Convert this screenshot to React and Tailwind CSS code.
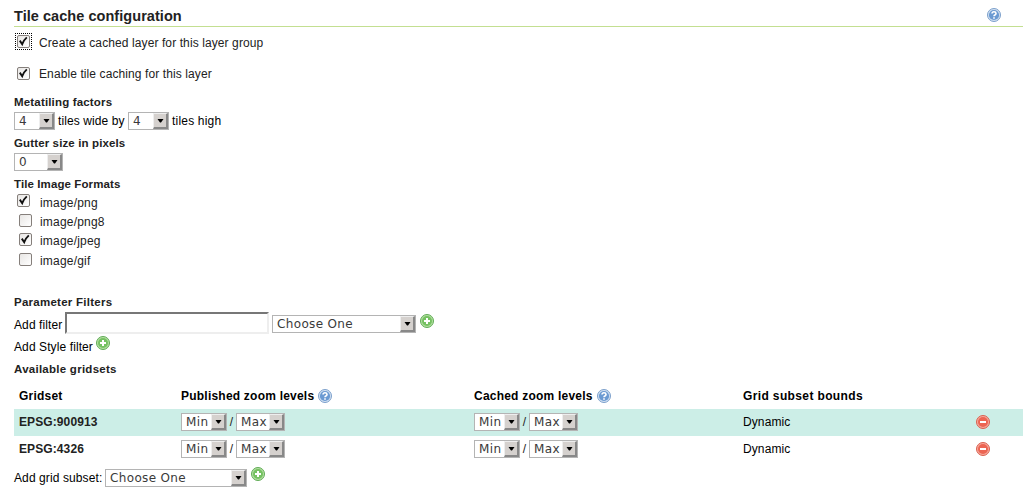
import React from "react";

function Check({ checked, focus, className = "" }) {
  return (
    <span className={`flex size-[17px] shrink-0 items-center justify-center border border-dotted ${focus ? "border-black" : "border-transparent"} ${className}`}>
      <span className="flex size-[13px] items-center justify-center rounded-[2px] border border-[#857f7b] bg-linear-to-br from-[#e8e6e4] to-white">
        {checked && (
          <svg width="11" height="11" viewBox="0 0 11 11" fill="none" className="shrink-0">
            <path d="M1.8 4.6 L4.2 8.2 Q5.8 4 8.8 1.4" stroke="#111" strokeWidth="1.9" />
          </svg>
        )}
      </span>
    </span>
  );
}

function Select({ children, className }) {
  return (
    <span className={`flex h-[18px] shrink-0 items-stretch justify-between border border-[#b4b4b4] bg-white font-['DejaVu_Sans',sans-serif] text-[12px] leading-[16px] tracking-[0.35px] text-[#3a3a3a] ${className}`}>
      <span className="pl-1">{children}</span>
      <span className="flex w-[15px] items-center justify-center border-t border-r-2 border-b-2 border-l border-t-[#eee] border-r-[#888] border-b-[#888] border-l-[#eee] bg-[#d5d1ce]">
        <svg width="7" height="4" viewBox="0 0 7 4"><path d="M0.5 0H6.5L4 3.5H3Z" fill="#000" /></svg>
      </span>
    </span>
  );
}

function Help({ className = "" }) {
  return (
    <svg width="14" height="14" viewBox="0 0 14 14" className={`shrink-0 ${className}`}>
      <circle cx="7" cy="7" r="6.5" fill="#d3e2f2" stroke="#7b9fcb" />
      <circle cx="7" cy="7" r="5.1" fill="#6b9ad2" />
      <path d="M5 5.5Q5.1 3.7 7 3.7T9 5.4Q9 6.4 7.9 7Q7 7.5 7 8.3M7 9.3V10.7" fill="none" stroke="#fff" strokeWidth="1.6" />
    </svg>
  );
}

function Add({ className = "" }) {
  return (
    <svg width="14" height="14" viewBox="0 0 14 14" className={`shrink-0 ${className}`}>
      <circle cx="7" cy="7" r="6.5" fill="#b5e0a3" stroke="#5fab55" />
      <circle cx="7" cy="7" r="5" fill="#75c162" />
      <path d="M7 4V10M4 7H10" stroke="#fff" strokeWidth="2" />
    </svg>
  );
}

function Remove() {
  return (
    <svg width="14" height="14" viewBox="0 0 14 14" className="shrink-0">
      <circle cx="7" cy="7" r="6.5" fill="#f7a99d" stroke="#d9604f" />
      <circle cx="7" cy="7" r="5" fill="#ec6553" />
      <path d="M4 7H10" stroke="#fff" strokeWidth="2" />
    </svg>
  );
}

function Label({ children, className = "" }) {
  return <h3 className={`h-[18px] text-[11.5px] leading-[18px] font-bold text-[#222] ${className}`}>{children}</h3>;
}

function Levels() {
  return (
    <span className="flex items-center text-[#222]">
      <Select className="w-[46px]">Min</Select>
      <span className="w-[9px] text-center">/</span>
      <Select className="w-[49px]">Max</Select>
    </span>
  );
}

const columns = "grid grid-cols-[162px_293px_269px_233px_1fr] items-center pl-[5px]";

export default function App() {
  return (
    <main className="h-[499px] w-[1034px] overflow-hidden bg-white pr-[11px] pl-[14px] font-['Liberation_Sans',sans-serif] text-[12px] leading-[18px] tracking-[0.1px] whitespace-nowrap text-black">
      <header className="flex h-[27px] items-center justify-between border-b border-[#c3df91] pt-[5px] pr-[22px]">
        <h2 className="text-[14.5px] font-bold tracking-[0.05px] text-[#222]">Tile cache configuration</h2>
        <Help className="mb-[2px]" />
      </header>
      <label className="flex h-[30px] items-center text-[#222]">
        <Check checked focus className="mb-[2px] ml-[1px]" />
        <span className="pt-[2px] pl-[7px]">Create a cached layer for this layer group</span>
      </label>
      <label className="flex h-[32px] items-center pl-[1px] text-[#222]">
        <Check checked />
        <span className="pt-[2px] pl-[7px]">Enable tile caching for this layer</span>
      </label>
      <Label className="mt-1 tracking-[0.17px]">Metatiling factors</Label>
      <div className="flex h-[20px] items-center">
        <Select className="w-[41px]">4</Select>
        <span className="w-[73px] pl-[3px]">tiles wide by</span>
        <Select className="w-[41px]">4</Select>
        <span className="pl-[3px] tracking-[0.2px]">tiles high</span>
      </div>
      <Label className="mt-[3px] tracking-[0.13px]">Gutter size in pixels</Label>
      <div className="flex h-[20px] items-center">
        <Select className="w-[49px]">0</Select>
      </div>
      <Label className="mt-[3px] tracking-[0.1px]">Tile Image Formats</Label>
      <div className="h-[77px] tracking-[0.2px] text-[#222]">
        <label className="flex h-[19px] items-center pl-[1px]"><Check checked className="mb-1" /><span className="pl-2">image/png</span></label>
        <label className="flex h-[19px] items-center pl-[3px]"><Check className="mb-[2px]" /><span className="pl-[6px]">image/png8</span></label>
        <label className="flex h-[20px] items-center pl-[3px]"><Check checked className="mb-1" /><span className="pl-[6px]">image/jpeg</span></label>
        <label className="flex h-[19px] items-center pl-[3px]"><Check className="mb-[2px]" /><span className="pl-[6px]">image/gif</span></label>
      </div>
      <Label className="mt-[23px] tracking-[0.26px]">Parameter Filters</Label>
      <div className="flex h-[25px] items-center">
        <span className="w-[51px] pt-[2px]">Add filter</span>
        <input aria-label="Filter" className="mb-[1px] h-[22px] w-[204px] border-2 border-t-[#777] border-r-[#eee] border-b-[#eee] border-l-[#777] bg-white" />
        <Select className="mt-[1px] ml-[3px] w-[144px]">Choose One</Select>
        <Add className="mb-[5px] ml-1" />
      </div>
      <div className="flex h-[20px] items-center">
        <span className="w-[82px] pt-[2px]">Add Style filter</span>
        <Add className="mb-[6px]" />
      </div>
      <Label className="mt-1 tracking-[0.26px]">Available gridsets</Label>
      <section className="mt-[5px]">
        <div className={`${columns} h-[26px] font-bold tracking-[0.22px]`}>
          <span>Gridset</span>
          <span className="flex items-center"><span className="w-[137px]">Published zoom levels</span><Help /></span>
          <span className="flex items-center"><span className="w-[123px]">Cached zoom levels</span><Help /></span>
          <span className="tracking-[0.37px]">Grid subset bounds</span>
        </div>
        <div className={`${columns} h-[27px] bg-[#cceee7] pb-[1px]`}>
          <b className="text-[#222]">EPSG:900913</b><Levels /><Levels /><span>Dynamic</span><Remove />
        </div>
        <div className={`${columns} h-[27px] pb-[1px]`}>
          <b className="text-[#222]">EPSG:4326</b><Levels /><Levels /><span>Dynamic</span><Remove />
        </div>
      </section>
      <div className="flex h-[30px] items-center">
        <span className="w-[91px]">Add grid subset:</span>
        <Select className="w-[142px]">Choose One</Select>
        <Add className="mb-[8px] ml-1" />
      </div>
    </main>
  );
}
